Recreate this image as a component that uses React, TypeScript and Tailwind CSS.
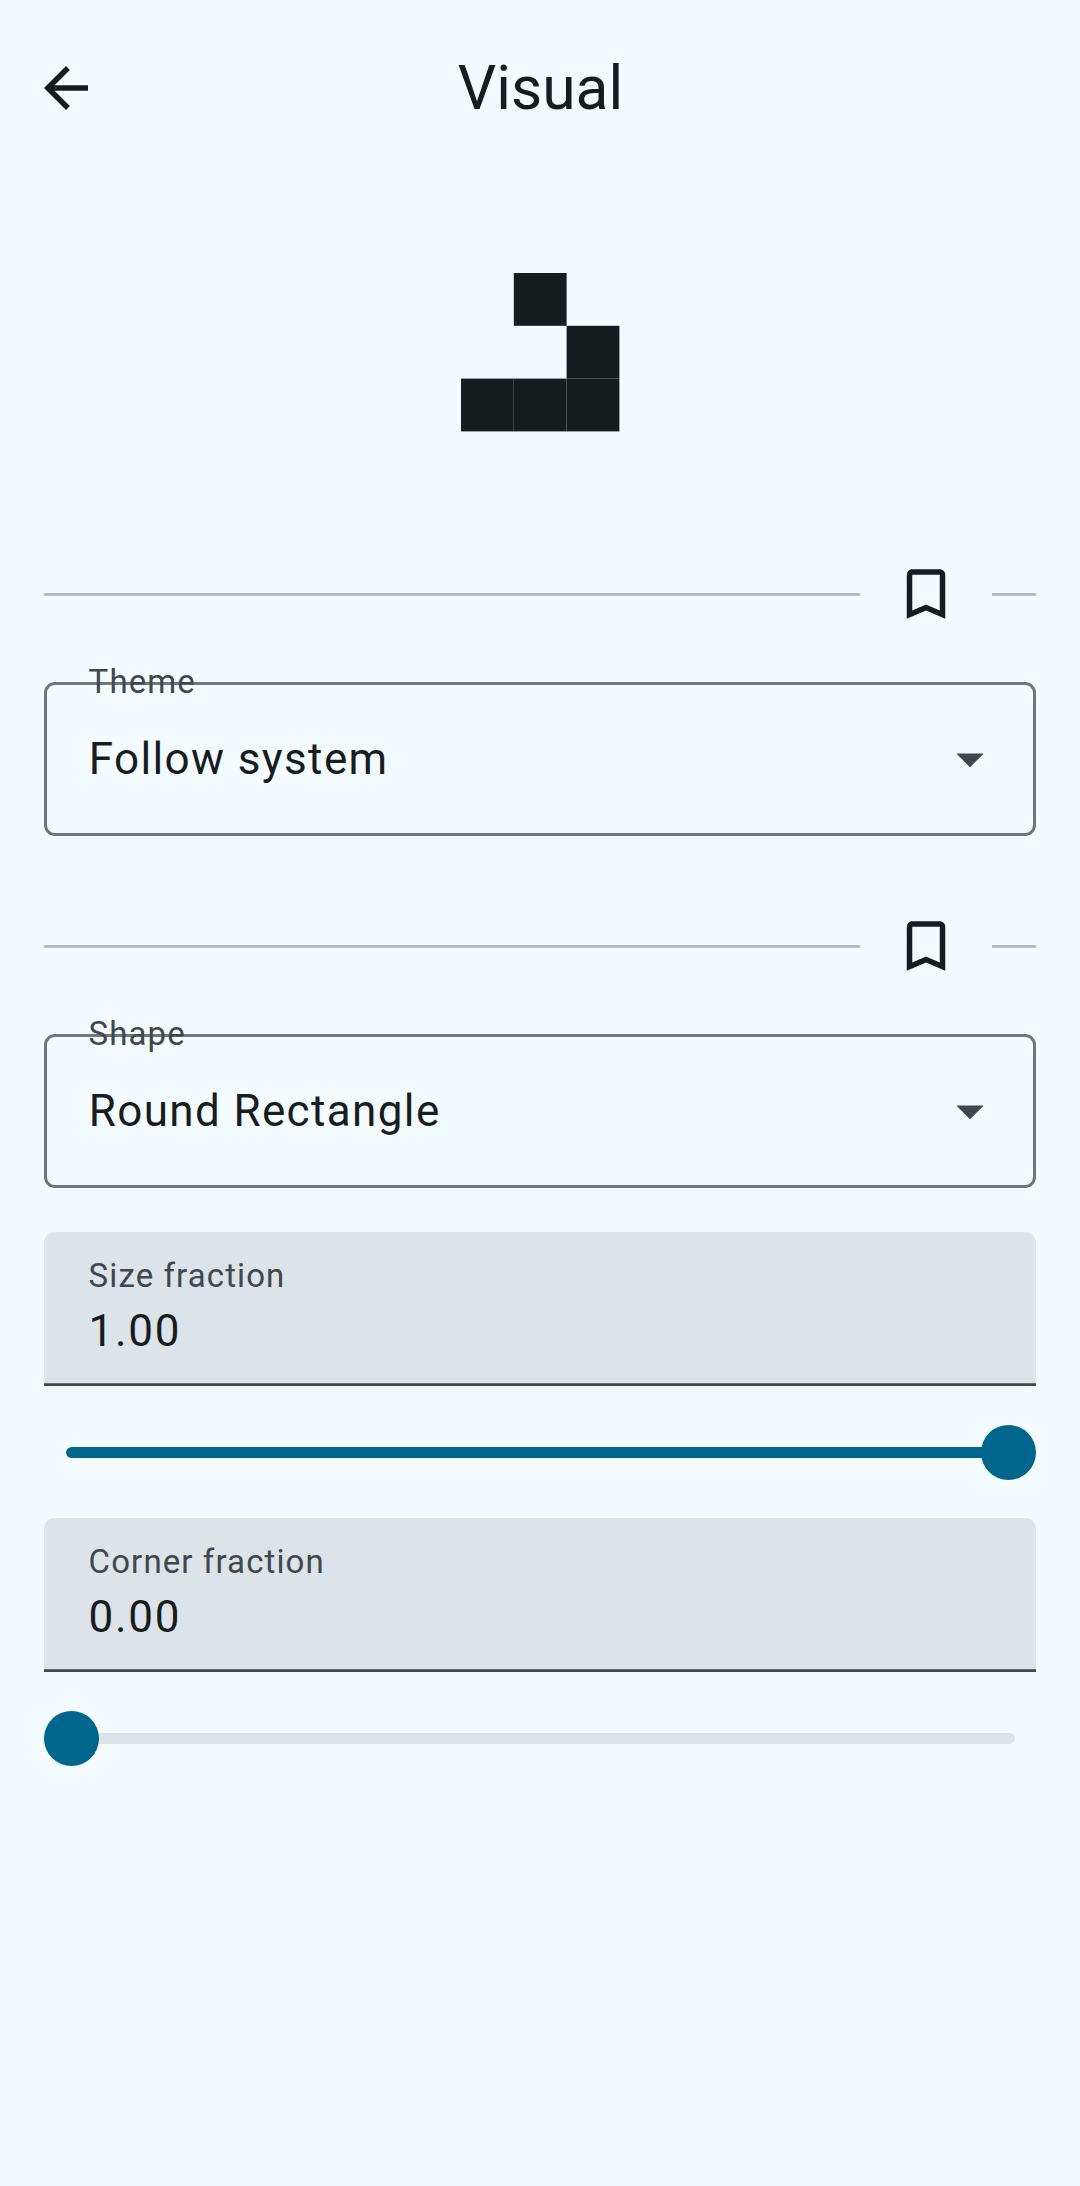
import React from "react";

const CELL = 52.8;
const cells = [
  [1, 0],
  [2, 1],
  [0, 2],
  [1, 2],
  [2, 2],
];

function GliderPreview() {
  return (
    <svg width="159" height="159" viewBox="0 0 159 159" className="ml-px fill-[#171c1f]">
      {cells.map(([col, row]) => (
        <rect key={`${col}-${row}`} x={col * CELL} y={row * CELL} width={CELL} height={CELL} />
      ))}
    </svg>
  );
}

function DividerLine({ className }: { className: string }) {
  return (
    <div className={`h-[3px] border-b border-[#c0c8cd] bg-[#b0b8bd] ${className}`} />
  );
}

function BookmarkDivider() {
  return (
    <div className="flex h-[132px] items-center">
      <DividerLine className="grow" />
      <button className="flex size-[132px] items-center justify-center" aria-label="Bookmark">
        <svg viewBox="0 0 24 24" className="size-[66px] fill-[#171c1f]">
          <path d="M17 3H7c-1.100 0-1.990.9-1.990 2L5 21l7-3 7 3V5c0-1.100-.9-2-2-2zm0 15l-5-2.180L7 18V5h10v13z" />
        </svg>
      </button>
      <DividerLine className="w-[44px]" />
    </div>
  );
}

function SelectField({ label, value }: { label: string; value: string }) {
  return (
    <div className="relative mt-[22px] flex h-[154px] items-center justify-between rounded-[11px] border-[3px] border-[#70787d] pr-[30px] pl-[41.7px]">
      <span className="absolute top-[-25px] left-[41.6px] text-[33px] leading-[44px] tracking-[1.1px] text-[#40484d]">
        {label}
      </span>
      <span className="text-[44px] leading-[66px] tracking-[1.375px]">{value}</span>
      <svg viewBox="0 0 24 24" className="size-[66px] fill-[#40484d]">
        <path d="M7 10l5 5 5-5z" />
      </svg>
    </div>
  );
}

function NumberField({ label, value }: { label: string; value: string }) {
  return (
    <div className="relative flex h-[154px] flex-col rounded-t-[11px] bg-[#dce3e9] px-[44.6px] pt-[22px]">
      <span className="text-[33px] leading-[44px] tracking-[1.1px] text-[#40484d]">{label}</span>
      <span className="text-[44px] leading-[66px] tracking-[1.7px]">{value}</span>
      <div className="absolute inset-x-0 bottom-0 h-[3px] border-t border-[#676f74] bg-[#40484d]" />
    </div>
  );
}

function Slider({ fraction }: { fraction: number }) {
  return (
    <div className="relative flex h-[132px] items-center px-[21.5px]">
      <div className="h-[11px] grow overflow-hidden rounded-full bg-[#dce3e9]">
        <div className="h-full rounded-full bg-[#00668b]" style={{ width: `${fraction * 100}%` }} />
      </div>
      <div
        className="absolute size-[55px] rounded-full bg-[#00668b]"
        style={{ left: `calc((100% - 55px) * ${fraction})` }}
      />
    </div>
  );
}

export default function App() {
  return (
    <div className="min-h-[2186px] w-full bg-[#f3fbff] px-[44px] font-['Roboto',sans-serif] text-[#171c1f]">
      <header className="grid h-[176px] grid-cols-[66px_1fr_66px] items-center">
        <button aria-label="Back" className="-ml-[11px]">
          <svg viewBox="0 0 24 24" className="size-[66px] fill-[#171c1f]">
            <path d="M20 11H7.830l5.590-5.590L12 4l-8 8 8 8 1.410-1.410L7.830 13H20v-2z" />
          </svg>
        </button>
        <h1 className="pl-px text-center text-[60.5px] leading-[77px]">Visual</h1>
      </header>
      <div className="flex h-[352px] justify-center pt-[97px]">
        <GliderPreview />
      </div>
      <main>
        <BookmarkDivider />
        <SelectField label="Theme" value="Follow system" />
        <div className="mt-[44px]">
          <BookmarkDivider />
        </div>
        <SelectField label="Shape" value="Round Rectangle" />
        <div className="mt-[44px]">
          <NumberField label="Size fraction" value="1.00" />
          <Slider fraction={1} />
        </div>
        <div>
          <NumberField label="Corner fraction" value="0.00" />
          <Slider fraction={0} />
        </div>
      </main>
    </div>
  );
}
